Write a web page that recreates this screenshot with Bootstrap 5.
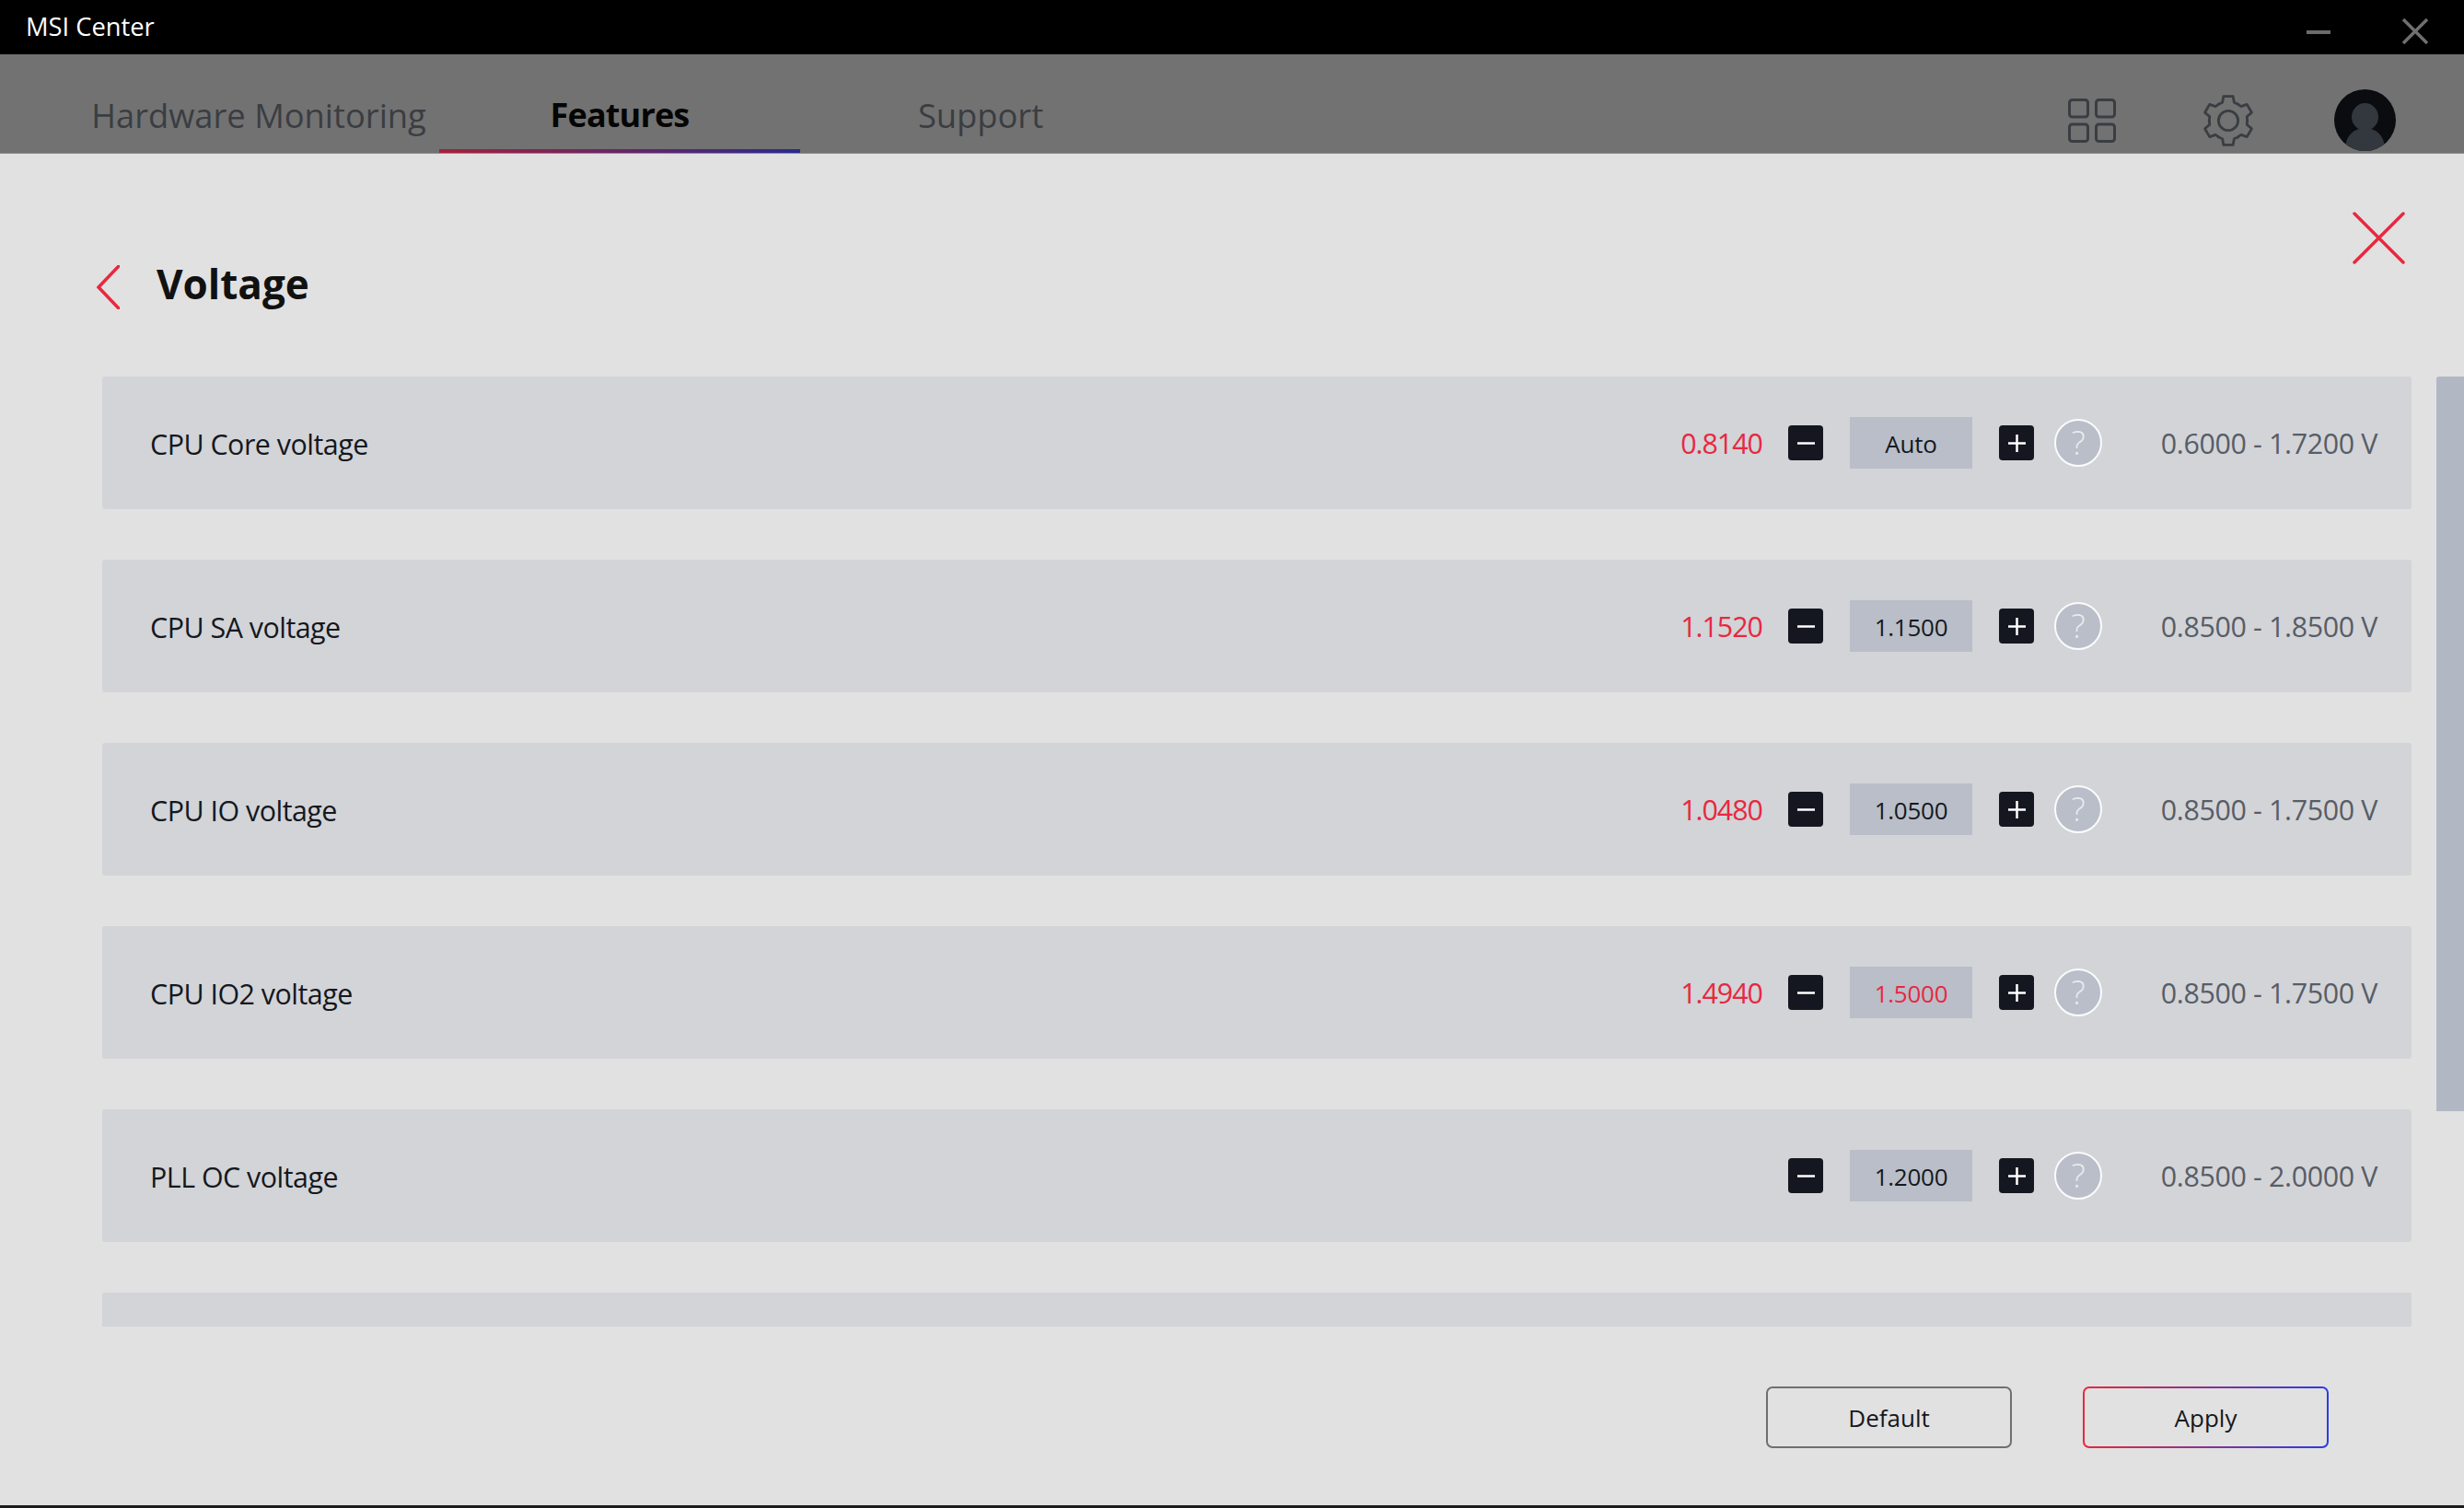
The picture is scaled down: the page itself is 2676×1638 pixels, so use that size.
<!DOCTYPE html>
<html lang="en">
<head>
    <meta charset="UTF-8">
    <meta name="viewport" content="width=device-width, initial-scale=1.0">
    <title>MSI Center</title>
    <link href="https://cdn.jsdelivr.net/npm/bootstrap@5.3.0/dist/css/bootstrap.min.css" rel="stylesheet">
    <style>
        html, body { height: 100%; }
        body { background: #e1e1e1; overflow: hidden; font-family: "Open Sans", "Liberation Sans", sans-serif; color: #15181d; }
        .app-window { height: 1638px; }
        .title-bar { height: 59px; background: #000; color: #fff; font-size: 27.3px; padding: 0 39px 0 28px; }
        .title-bar .win-min { margin: 11px 78px 0 0; }
        .title-bar .win-close { margin-top: 9px; }
        .tab-bar { height: 108px; background: #727272; padding: 0 74px 0 85px; border-bottom: 1px solid #8b8b8b; }
        .tab-bar .nav-link { width: 392px; height: 107px; padding: 29px 0 0; display: flex; align-items: center; justify-content: center; color: #3a3d42; font-size: 36.3px; border-bottom: 4px solid transparent; }
        .tab-bar .nav-link.active { color: #050505; font-size: 36px; font-weight: 700; letter-spacing: -.85px; border-image: linear-gradient(90deg, #a81f3c, #2a2a92) 1; }
        .tool-set { height: 67px; margin-bottom: 2px; }
        .tool-grid { margin-right: 94px; }
        .tool-gear { margin-right: 87px; }
        .page-head { height: 242px; padding: 0 64px 0 105px; }
        .back-group { margin-top: 117px; gap: 40px; }
        .page-title { font-size: 44px; font-weight: 700; color: #111; margin: 0 0 8px; line-height: 48px; }
        .page-close { margin-top: 63px; }
        .list-area { height: 1032px; padding-left: 111px; gap: 27px; }
        .voltage-list { width: 2508px; overflow: hidden; gap: 55px; }
        .voltage-row { flex: 0 0 144px; background: #d2d4d8; border-radius: 3px; padding: 0 37px 0 52px; font-size: 30.4px; }
        .row-label { letter-spacing: -.5px; padding-top: 4px; }
        .reading { color: #e8283f; width: 120px; text-align: right; margin-right: 28px; letter-spacing: -1px; padding-top: 2px; }
        .step-btn { width: 38px; height: 38px; padding: 0; background: #141720; border: 0; border-radius: 4px; }
        .step-btn:hover { background: #141720; }
        .set-value { width: 133px; height: 56px; margin: 0 29px; padding-top: 2px; background: #b9bec9; font-size: 26px; letter-spacing: -.25px; }
        .set-value.over { color: #e8283f; }
        .help-dot { width: 52px; height: 52px; margin-left: 22px; border: 2px solid #fafbfc; border-radius: 50%; background: #b9bec9; color: #e9ebee; font-size: 36px; font-weight: 300; line-height: 1; }
        .range-text { width: 299px; text-align: right; color: #585d66; letter-spacing: -.36px; padding-top: 2px; }
        .scroll-thumb { width: 30px; height: 798px; background: #b2b7c4; border-radius: 3px 0 0 0; }
        .page-foot { padding: 65px 147px 0 0; gap: 77px; }
        .foot-btn { width: 267px; height: 67px; padding: 2px 0 0; font-size: 26px; color: #15181d; border-radius: 7px; background: transparent; border: 2px solid #6f6f6f; }
        .foot-btn:hover { color: #15181d; }
        .foot-btn.apply { border-color: transparent; background: linear-gradient(#e1e1e1, #e1e1e1) padding-box, linear-gradient(90deg, #e8283f, #2a3de0) border-box; }
        .bottom-strip { height: 3px; background: #1c1c1c; }
    </style>
</head>
<body>
    <div class="app-window d-flex flex-column">
        <div class="title-bar d-flex align-items-center flex-shrink-0">
            <span>MSI Center</span>
            <svg class="win-min ms-auto" width="26" height="4" viewBox="0 0 26 4"><rect width="26" height="4" fill="#6b6b6b"/></svg>
            <svg class="win-close" width="28" height="28" viewBox="0 0 28 28"><path d="M1 1 27 27M27 1 1 27" stroke="#6f6f6f" stroke-width="3.5" fill="none"/></svg>
        </div>

        <div class="tab-bar d-flex align-items-end flex-shrink-0">
            <ul class="nav">
                <li class="nav-item"><a class="nav-link" href="#">Hardware Monitoring</a></li>
                <li class="nav-item"><a class="nav-link active" href="#">Features</a></li>
                <li class="nav-item"><a class="nav-link" href="#">Support</a></li>
            </ul>
            <div class="tool-set d-flex align-items-center ms-auto">
                <svg class="tool-grid" width="52" height="48" viewBox="0 0 52 48" fill="none" stroke="#3a3d42" stroke-width="3">
                    <rect x="1.5" y="1.5" width="20" height="18.5" rx="3"/>
                    <rect x="30.5" y="1.5" width="20" height="18.5" rx="3"/>
                    <rect x="1.5" y="28" width="20" height="18.5" rx="3"/>
                    <rect x="30.5" y="28" width="20" height="18.5" rx="3"/>
                </svg>
                <svg class="tool-gear" width="56" height="56" viewBox="0 0 100 100" fill="none" stroke="#3a3d42" stroke-width="5" stroke-linecap="round" stroke-linejoin="round">
                    <defs><path id="gear-tooth" d="M31.5 18Q35 16.5 38.6 14.8L40.8 2.9H59.2L61.4 14.8Q65 16.5 68.5 18"/></defs>
                    <use href="#gear-tooth"/>
                    <use href="#gear-tooth" transform="rotate(60 50 50)"/>
                    <use href="#gear-tooth" transform="rotate(120 50 50)"/>
                    <use href="#gear-tooth" transform="rotate(180 50 50)"/>
                    <use href="#gear-tooth" transform="rotate(240 50 50)"/>
                    <use href="#gear-tooth" transform="rotate(300 50 50)"/>
                    <circle cx="50" cy="50" r="19"/>
                </svg>
                <svg width="67" height="67" viewBox="0 0 67 67">
                    <defs><clipPath id="avatar-clip"><circle cx="33.5" cy="33.5" r="33.5"/></clipPath></defs>
                    <circle cx="33.5" cy="33.5" r="33.5" fill="#0a0c10"/>
                    <g clip-path="url(#avatar-clip)" fill="#33383e">
                        <ellipse cx="33.5" cy="30" rx="14.5" ry="15"/>
                        <ellipse cx="33.5" cy="62" rx="21" ry="20"/>
                    </g>
                </svg>
            </div>
        </div>

        <div class="page-head d-flex justify-content-between align-items-start flex-shrink-0">
            <div class="back-group d-flex align-items-center">
                <svg width="25" height="48" viewBox="0 0 25 48"><path d="M24 1 2 24 24 47" stroke="#e8283f" stroke-width="3.5" fill="none" stroke-linecap="round"/></svg>
                <h1 class="page-title">Voltage</h1>
            </div>
            <svg class="page-close" width="57" height="57" viewBox="0 0 57 57"><path d="M2 2 55 55M55 2 2 55" stroke="#e8283f" stroke-width="3.5" fill="none" stroke-linecap="round"/></svg>
        </div>

        <div class="list-area d-flex flex-shrink-0">
            <div class="voltage-list d-flex flex-column">
                <div class="voltage-row d-flex align-items-center">
                    <span class="row-label me-auto">CPU Core voltage</span>
                    <span class="reading">0.8140</span>
                    <button class="btn step-btn d-flex align-items-center justify-content-center"><svg width="19" height="19" viewBox="0 0 19 19"><path d="M0 9.5H19" stroke="#fff" stroke-width="2.5"/></svg></button>
                    <div class="set-value d-flex align-items-center justify-content-center">Auto</div>
                    <button class="btn step-btn d-flex align-items-center justify-content-center"><svg width="19" height="19" viewBox="0 0 19 19"><path d="M0 9.5H19M9.5 0V19" stroke="#fff" stroke-width="2.5"/></svg></button>
                    <div class="help-dot d-flex align-items-center justify-content-center">?</div>
                    <span class="range-text">0.6000 - 1.7200 V</span>
                </div>
                <div class="voltage-row d-flex align-items-center">
                    <span class="row-label me-auto">CPU SA voltage</span>
                    <span class="reading">1.1520</span>
                    <button class="btn step-btn d-flex align-items-center justify-content-center"><svg width="19" height="19" viewBox="0 0 19 19"><path d="M0 9.5H19" stroke="#fff" stroke-width="2.5"/></svg></button>
                    <div class="set-value d-flex align-items-center justify-content-center">1.1500</div>
                    <button class="btn step-btn d-flex align-items-center justify-content-center"><svg width="19" height="19" viewBox="0 0 19 19"><path d="M0 9.5H19M9.5 0V19" stroke="#fff" stroke-width="2.5"/></svg></button>
                    <div class="help-dot d-flex align-items-center justify-content-center">?</div>
                    <span class="range-text">0.8500 - 1.8500 V</span>
                </div>
                <div class="voltage-row d-flex align-items-center">
                    <span class="row-label me-auto">CPU IO voltage</span>
                    <span class="reading">1.0480</span>
                    <button class="btn step-btn d-flex align-items-center justify-content-center"><svg width="19" height="19" viewBox="0 0 19 19"><path d="M0 9.5H19" stroke="#fff" stroke-width="2.5"/></svg></button>
                    <div class="set-value d-flex align-items-center justify-content-center">1.0500</div>
                    <button class="btn step-btn d-flex align-items-center justify-content-center"><svg width="19" height="19" viewBox="0 0 19 19"><path d="M0 9.5H19M9.5 0V19" stroke="#fff" stroke-width="2.5"/></svg></button>
                    <div class="help-dot d-flex align-items-center justify-content-center">?</div>
                    <span class="range-text">0.8500 - 1.7500 V</span>
                </div>
                <div class="voltage-row d-flex align-items-center">
                    <span class="row-label me-auto">CPU IO2 voltage</span>
                    <span class="reading">1.4940</span>
                    <button class="btn step-btn d-flex align-items-center justify-content-center"><svg width="19" height="19" viewBox="0 0 19 19"><path d="M0 9.5H19" stroke="#fff" stroke-width="2.5"/></svg></button>
                    <div class="set-value over d-flex align-items-center justify-content-center">1.5000</div>
                    <button class="btn step-btn d-flex align-items-center justify-content-center"><svg width="19" height="19" viewBox="0 0 19 19"><path d="M0 9.5H19M9.5 0V19" stroke="#fff" stroke-width="2.5"/></svg></button>
                    <div class="help-dot d-flex align-items-center justify-content-center">?</div>
                    <span class="range-text">0.8500 - 1.7500 V</span>
                </div>
                <div class="voltage-row d-flex align-items-center">
                    <span class="row-label me-auto">PLL OC voltage</span>
                    <button class="btn step-btn d-flex align-items-center justify-content-center"><svg width="19" height="19" viewBox="0 0 19 19"><path d="M0 9.5H19" stroke="#fff" stroke-width="2.5"/></svg></button>
                    <div class="set-value d-flex align-items-center justify-content-center">1.2000</div>
                    <button class="btn step-btn d-flex align-items-center justify-content-center"><svg width="19" height="19" viewBox="0 0 19 19"><path d="M0 9.5H19M9.5 0V19" stroke="#fff" stroke-width="2.5"/></svg></button>
                    <div class="help-dot d-flex align-items-center justify-content-center">?</div>
                    <span class="range-text">0.8500 - 2.0000 V</span>
                </div>
                <div class="voltage-row"></div>
            </div>
            <div class="scroll-thumb"></div>
        </div>

        <div class="page-foot d-flex justify-content-end flex-shrink-0">
            <button class="btn foot-btn">Default</button>
            <button class="btn foot-btn apply">Apply</button>
        </div>
        <div class="bottom-strip mt-auto"></div>
    </div>
    <script src="https://cdn.jsdelivr.net/npm/bootstrap@5.3.0/dist/js/bootstrap.bundle.min.js"></script>
</body>
</html>
